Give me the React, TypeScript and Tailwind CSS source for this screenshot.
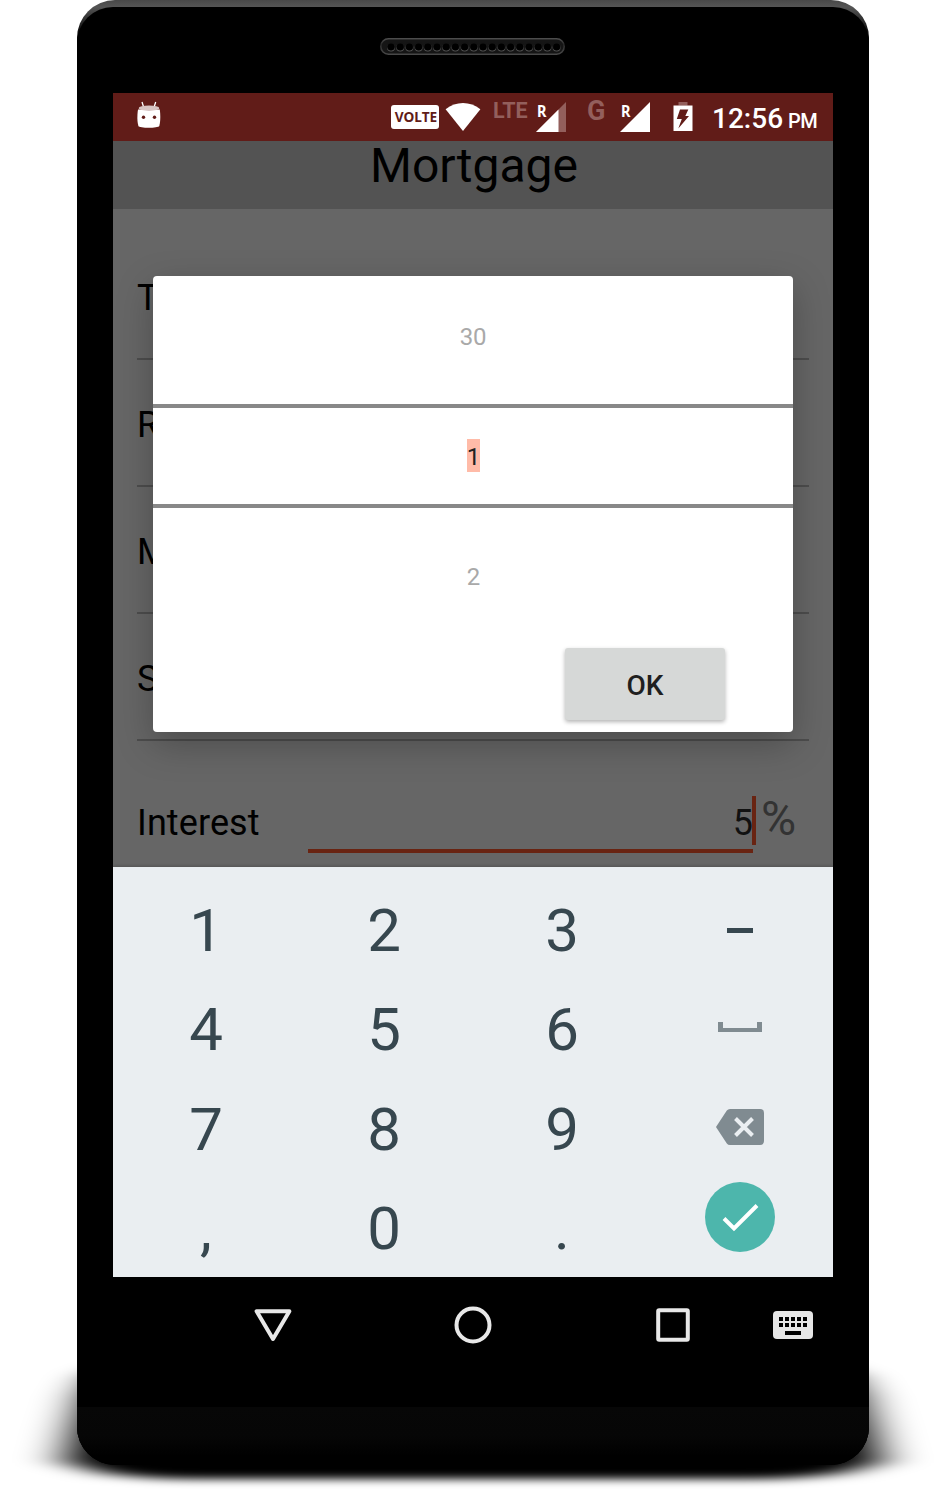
const FIELDS = ["Total", "Repayment", "Mortgage", "Start"];

function GroundShadow() {
  return (
    <svg className="absolute left-0 top-0" width="945" height="1490" viewBox="0 0 945 1490" aria-hidden="true">
      <defs>
        <filter id="ground" filterUnits="userSpaceOnUse" x="-60" y="1300" width="1065" height="240">
          <feGaussianBlur stdDeviation="23 4" />
        </filter>
      </defs>
      <path
        filter="url(#ground)"
        d="M130 1364H816L848 1376L861 1396L872 1430L881 1462L840 1474L780 1479H166L106 1474L65 1462L74 1430L85 1396L98 1376Z"
      />
    </svg>
  );
}

function Speaker() {
  const holes = Array.from({ length: 19 }, (_, i) => 11 + i * 9.2);
  return (
    <svg width="185" height="18" viewBox="0 0 185 18" aria-hidden="true">
      <defs>
        <linearGradient id="rim" x1="0" y1="0" x2="0" y2="1">
          <stop offset="0" stopColor="#4c4c4c" />
          <stop offset="0.35" stopColor="#2a2a2a" />
          <stop offset="1" stopColor="#484848" />
        </linearGradient>
      </defs>
      <rect x="0.8" y="0.8" width="183.4" height="15.4" rx="7.7" fill="#151515" stroke="url(#rim)" strokeWidth="1.6" />
      {holes.map((x) => (
        <g key={x}>
          <circle cx={x} cy="9.6" r="4" fill="#545454" />
          <circle cx={x} cy="8.3" r="4" fill="#151515" />
          <circle cx={x} cy="9" r="3.4" fill="#000" />
        </g>
      ))}
    </svg>
  );
}

function Marshmallow() {
  return (
    <svg width="24" height="29" viewBox="0 0 24 29" aria-hidden="true">
      <path d="M5 1l1.6 5M18.7 1l-1.6 5" stroke="#fff" strokeWidth="1.3" />
      <path d="M1 8.5C.3 13-.1 20 1.4 25c.8 2.4 19.8 2.4 20.9 0 1.400-5 1.100-12 .5-16.500Z" fill="#fff" />
      <ellipse cx="12" cy="7.200" rx="10.300" ry="2.700" fill="#d8c5c4" />
      <circle cx="6.500" cy="16.200" r="1.700" fill="#611c18" />
      <circle cx="17.500" cy="16.200" r="1.700" fill="#611c18" />
    </svg>
  );
}

function Signal({ weak = false }: { weak?: boolean }) {
  return (
    <svg className="overflow-visible" width="30" height="30" viewBox="0 0 30 30" aria-hidden="true">
      <path d="M30 0V30H0Z" fill={weak ? "#935f5c" : "#fff"} />
      {weak && <path d="M22.500 7.500V30H0Z" fill="#fff" />}
      <text x="1" y="14.500" fontFamily="Noto Sans, sans-serif" fontWeight="700" fontSize="16.500" textLength="9.500" lengthAdjust="spacingAndGlyphs" fill="#fff">
        R
      </text>
    </svg>
  );
}

function StatusBar() {
  return (
    <div className="flex h-12 shrink-0 items-start bg-[#611c18] pl-6 font-medium text-white">
      <div className="mt-2">
        <Marshmallow />
      </div>
      <div className="ml-[230px] mt-3 flex h-6 w-12 items-center justify-center rounded-[3px] bg-white">
        <svg className="overflow-visible" width="44" height="14" viewBox="0 0 44 14">
          <text x="1.700" y="12.400" fontFamily="Noto Sans, sans-serif" fontWeight="700" fontSize="14.500" textLength="42.500" lengthAdjust="spacingAndGlyphs" fill="#611c18">
            VOLTE
          </text>
        </svg>
      </div>
      <svg className="ml-1.5 mt-2.5" width="36" height="28" viewBox="0 0 36 28" aria-hidden="true">
        <path d="M.6 6.300C11-2 25-2 35.400 6.300L18 28Z" fill="#fff" />
      </svg>
      <span className="ml-[12px] mt-1 w-[37px] text-[21.5px] leading-[28px] font-bold text-[#935f5c]">LTE</span>
      <div className="ml-[6px] mt-[9px]">
        <Signal weak />
      </div>
      <span className="ml-[21px] mt-[3px] w-[20px] text-[27px] leading-[31px] font-bold text-[#935f5c]">G</span>
      <div className="ml-[13px] mt-[9px]">
        <Signal />
      </div>
      <svg className="ml-[23px] mt-[9px]" width="20" height="29" viewBox="0 0 20 29" aria-hidden="true">
        <path d="M5.500 0h9v3.500h-9Z" fill="#935f5c" />
        <path d="M.5 3.500h19V29H.5Z" fill="#fff" />
        <path d="M7 7.500h8.300L12.300 14H16L5.300 26.500L8.800 17H3.800Z" fill="#611c18" />
      </svg>
      <div className="ml-[19px] mt-[10px] flex items-baseline whitespace-nowrap">
        <span className="w-[76px] text-[28px] leading-[32px]">12:56</span>
        <span className="text-[20px] leading-[24px] tracking-[-0.5px]">PM</span>
      </div>
    </div>
  );
}

function Picker() {
  return (
    <div className="absolute left-10 top-[183px] flex h-[456px] w-[640px] flex-col rounded bg-white text-2xl shadow-[0_12px_36px_rgba(0,0,0,0.26)]">
      <div className="flex h-32 items-center justify-center pb-[7px] tracking-[-0.3px] text-[#a9a9a9]">30</div>
      <div className="flex h-[104px] items-center justify-center border-y-4 border-[#888] pb-[2px] text-[#222]">
        <span className="flex h-[33px] w-[13px] items-center justify-center bg-[#ffbba8] pl-px pt-[3px]">1</span>
      </div>
      <div className="flex h-[140px] items-center justify-center pb-[2px] pl-px text-[#a9a9a9]">2</div>
      <button className="mr-[68px] h-[72px] w-40 self-end rounded-[3px] bg-[#d6d8d7] pt-[4px] text-[28px] font-medium text-[#1f1f1f] shadow-[0_2px_4px_rgba(0,0,0,0.3)]">
        OK
      </button>
    </div>
  );
}

function Form() {
  return (
    <div className="flex h-[658px] shrink-0 flex-col bg-[#666] px-6 pt-6 text-4xl text-black">
      {FIELDS.map((name) => (
        <div key={name} className="flex h-[127px] shrink-0 items-center border-b-2 border-[#4d4d4d] pt-1">
          {name}
        </div>
      ))}
      <div className="flex h-[126px] items-start">
        <span className="mt-[62px] w-[171px] leading-10 tracking-[0.1px]">Interest</span>
        <div className="mt-[55px] flex h-[57px] w-[445px] items-start justify-end border-b-4 border-[#692412]">
          <span className="mt-[7px] leading-10 text-[#111]">5</span>
          <span className="-mr-[3px] -ml-px h-[49px] w-1 shrink-0 bg-[#692412]" />
        </div>
        <span className="ml-[8px] mt-[53px] text-5xl leading-[50px] text-[#333]">%</span>
      </div>
    </div>
  );
}

function Key({ label }: { label: string }) {
  return <button className="flex h-full items-center justify-center pb-px text-[60px] leading-none">{label}</button>;
}

function Keypad() {
  return (
    <div className="relative grid h-[410px] shrink-0 grid-cols-4 grid-rows-[99px_99px_100px_99px] bg-[#eaeef1] px-1 pt-[15px] text-[#37474f] shadow-[0_-1px_3px_rgba(0,0,0,0.2)]">
      <Key label="1" />
      <Key label="2" />
      <Key label="3" />
      <div className="flex items-center justify-center">
        <span className="mb-[2px] h-[5px] w-[26px] bg-[#37474f]" />
      </div>
      <Key label="4" />
      <Key label="5" />
      <Key label="6" />
      <div className="flex items-center justify-center">
        <span className="mb-[7px] h-[10px] w-[44px] border-x-[5px] border-b-4 border-[#808b91]" />
      </div>
      <Key label="7" />
      <Key label="8" />
      <Key label="9" />
      <div className="flex items-center justify-center pb-[6px]">
        <svg width="48" height="36" viewBox="0 0 48 36" aria-label="Delete">
          <path d="M14 0H44a4 4 0 0 1 4 4V32a4 4 0 0 1-4 4H14q-2 0-3.200-1.600L0 18L10.800 1.600Q12 0 14 0Z" fill="#808b91" />
          <path d="M19.500 9.500l17 17M36.500 9.500l-17 17" stroke="#eaeef1" strokeWidth="4" />
        </svg>
      </div>
      <Key label="," />
      <Key label="0" />
      <Key label="." />
      <div className="flex items-start justify-center pt-[2px]">
        <svg width="70" height="70" viewBox="0 0 70 70" aria-label="Done">
          <circle cx="35" cy="35" r="35" fill="#4db6ac" />
          <path d="M19 36.500L29 46.500L52 23.500" fill="none" stroke="#fff" strokeWidth="4" />
        </svg>
      </div>
    </div>
  );
}

function NavBar() {
  return (
    <div className="mx-9 flex h-24 shrink-0 items-center">
      <svg className="ml-[140px]" width="40" height="40" viewBox="0 0 40 40" aria-label="Back">
        <path d="M3.600 6.200H36.400L20 34Z" fill="none" stroke="#e8e8e8" strokeWidth="4" strokeLinejoin="round" />
      </svg>
      <svg className="ml-[160px]" width="40" height="40" viewBox="0 0 40 40" aria-label="Home">
        <circle cx="20" cy="20" r="16.500" fill="none" stroke="#e8e8e8" strokeWidth="4" />
      </svg>
      <svg className="ml-[160px]" width="40" height="40" viewBox="0 0 40 40" aria-label="Recent">
        <rect x="5.200" y="5.200" width="29.600" height="29.600" rx="1" fill="none" stroke="#e8e8e8" strokeWidth="4" />
      </svg>
      <svg className="ml-[80px]" width="40" height="28" viewBox="0 0 40 28" aria-label="Keyboard">
        <rect width="40" height="28" rx="4" fill="#e6e6e6" />
        {[6, 12, 18, 24, 30].map((x) => (
          <path key={x} d={`M${x} 6h4v4h-4ZM${x} 12h4v4h-4Z`} fill="#000" />
        ))}
        <path d="M12 20h16v4H12Z" fill="#000" />
      </svg>
    </div>
  );
}

export default function App() {
  return (
    <div className="relative flex h-[1490px] w-[945px] overflow-hidden bg-white pl-[77px] font-['Roboto',sans-serif]">
      <GroundShadow />
      <div className="relative h-[1465px] w-[792px] overflow-hidden rounded-[38px] bg-[linear-gradient(to_bottom,#484848_0px,#555_7px,#111_30px,#000_44px)] pt-[7px]">
        <div className="flex h-[1458px] flex-col rounded-t-[36px] bg-black">
          <div className="flex h-[86px] shrink-0 items-start justify-center pt-[31px] pr-px">
            <Speaker />
          </div>
          <main className="relative mx-9 flex h-[1184px] shrink-0 flex-col overflow-hidden">
            <StatusBar />
            <h1 className="flex h-[68px] shrink-0 items-start justify-center bg-[#535353] pl-[2px] text-5xl leading-[50px] text-black">
              Mortgage
            </h1>
            <Form />
            <Picker />
            <Keypad />
          </main>
          <NavBar />
          <div className="mt-[34px] h-[58px] shrink-0 bg-[linear-gradient(to_bottom,#070707_0%,#060606_50%,#000_85%)]" />
        </div>
      </div>
    </div>
  );
}
